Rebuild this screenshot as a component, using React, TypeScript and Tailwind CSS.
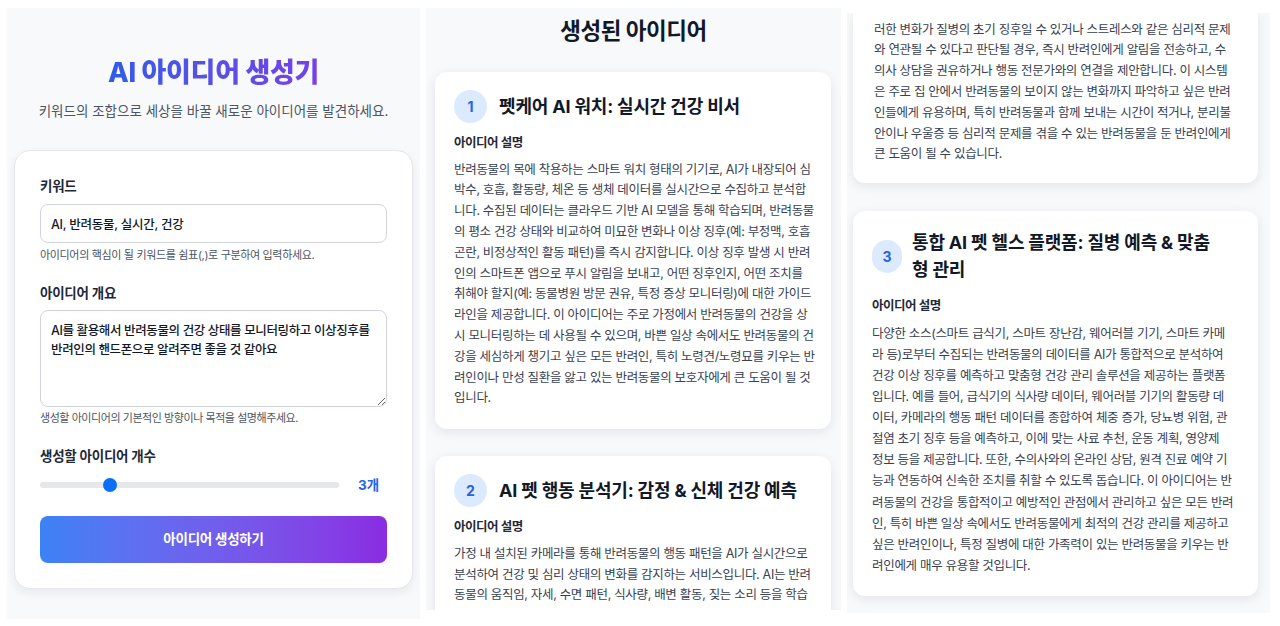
import React from 'react';

const idea1 = [
  '반려동물의 목에 착용하는 스마트 워치 형태의 기기로, AI가 내장되어 심',
  '박수, 호흡, 활동량, 체온 등 생체 데이터를 실시간으로 수집하고 분석합',
  '니다. 수집된 데이터는 클라우드 기반 AI 모델을 통해 학습되며, 반려동물',
  '의 평소 건강 상태와 비교하여 미묘한 변화나 이상 징후(예: 부정맥, 호흡',
  '곤란, 비정상적인 활동 패턴)를 즉시 감지합니다. 이상 징후 발생 시 반려',
  '인의 스마트폰 앱으로 푸시 알림을 보내고, 어떤 징후인지, 어떤 조치를',
  '취해야 할지(예: 동물병원 방문 권유, 특정 증상 모니터링)에 대한 가이드',
  '라인을 제공합니다. 이 아이디어는 주로 가정에서 반려동물의 건강을 상',
  '시 모니터링하는 데 사용될 수 있으며, 바쁜 일상 속에서도 반려동물의 건',
  '강을 세심하게 챙기고 싶은 모든 반려인, 특히 노령견/노령묘를 키우는 반',
  '려인이나 만성 질환을 앓고 있는 반려동물의 보호자에게 큰 도움이 될 것',
  '입니다.',
];

const idea2Top = [
  '가정 내 설치된 카메라를 통해 반려동물의 행동 패턴을 AI가 실시간으로',
  '분석하여 건강 및 심리 상태의 변화를 감지하는 서비스입니다. AI는 반려',
  '동물의 움직임, 자세, 수면 패턴, 식사량, 배변 활동, 짖는 소리 등을 학습',
];

const idea2Bottom = [
  '러한 변화가 질병의 초기 징후일 수 있거나 스트레스와 같은 심리적 문제',
  '와 연관될 수 있다고 판단될 경우, 즉시 반려인에게 알림을 전송하고, 수',
  '의사 상담을 권유하거나 행동 전문가와의 연결을 제안합니다. 이 시스템',
  '은 주로 집 안에서 반려동물의 보이지 않는 변화까지 파악하고 싶은 반려',
  '인들에게 유용하며, 특히 반려동물과 함께 보내는 시간이 적거나, 분리불',
  '안이나 우울증 등 심리적 문제를 겪을 수 있는 반려동물을 둔 반려인에게',
  '큰 도움이 될 수 있습니다.',
];

const idea3 = [
  '다양한 소스(스마트 급식기, 스마트 장난감, 웨어러블 기기, 스마트 카메',
  '라 등)로부터 수집되는 반려동물의 데이터를 AI가 통합적으로 분석하여',
  '건강 이상 징후를 예측하고 맞춤형 건강 관리 솔루션을 제공하는 플랫폼',
  '입니다. 예를 들어, 급식기의 식사량 데이터, 웨어러블 기기의 활동량 데',
  '이터, 카메라의 행동 패턴 데이터를 종합하여 체중 증가, 당뇨병 위험, 관',
  '절염 초기 징후 등을 예측하고, 이에 맞는 사료 추천, 운동 계획, 영양제',
  '정보 등을 제공합니다. 또한, 수의사와의 온라인 상담, 원격 진료 예약 기',
  '능과 연동하여 신속한 조치를 취할 수 있도록 돕습니다. 이 아이디어는 반',
  '려동물의 건강을 통합적이고 예방적인 관점에서 관리하고 싶은 모든 반려',
  '인, 특히 바쁜 일상 속에서도 반려동물에게 최적의 건강 관리를 제공하고',
  '싶은 반려인이나, 특정 질병에 대한 가족력이 있는 반려동물을 키우는 반',
  '려인에게 매우 유용할 것입니다.',
];

function Paragraph({ lines, leading = 'leading-[20.8px]' }: { lines: string[]; leading?: string }) {
  return (
    <p className={`text-[12.5px] tracking-[-0.025em] text-[#374151] ${leading}`}>
      {lines.map((line, i) => (
        <span key={i} className="block whitespace-nowrap">{line}</span>
      ))}
    </p>
  );
}

function Badge({ n, className = 'w-[33px]' }: { n: number; className?: string }) {
  return (
    <div className={`flex h-[33px] shrink-0 items-center justify-center rounded-full bg-[#dbeafe] text-[14px] font-bold text-[#2563eb] ${className}`}>
      {n}
    </div>
  );
}

type CardProps = {
  n: number;
  title: React.ReactNode;
  lines: string[];
  badge?: string;
  gap?: string;
  labelGap?: string;
  leading?: string;
};

function IdeaCard({ n, title, lines, badge, gap = 'gap-3', labelGap = 'mt-[11px]', leading }: CardProps) {
  return (
    <div className="rounded-xl bg-white px-[19px] pt-[18px] pb-[20px] shadow-[0_3px_12px_rgba(15,23,42,0.09)]">
      <div className={`flex items-center ${gap}`}>
        <Badge n={n} className={badge} />
        <h3 className="text-[18px] font-bold leading-[27px] tracking-[-0.01em] text-[#111827]">{title}</h3>
      </div>
      <h4 className={`${labelGap} text-[12.5px] font-semibold leading-[18px] tracking-[-0.04em] text-[#1f2937]`}>아이디어 설명</h4>
      <div className="mt-[7.6px]">
        <Paragraph lines={lines} leading={leading} />
      </div>
    </div>
  );
}

export default function App() {
  return (
    <div className="flex h-[626px] w-[1280px] items-start overflow-hidden bg-white font-['Inter','Noto_Sans_CJK_KR',sans-serif]">
      {/* 입력 폼 */}
      <section className="mt-[8px] ml-[7px] h-[611px] w-[413px] bg-[#f8f9fb] pt-[47px]">
        <h1 className="text-center text-[27px] font-extrabold leading-[36px] tracking-[-0.01em]">
          <span className="bg-linear-to-r from-[#2f5be6] to-[#7441e8] bg-clip-text text-transparent">AI 아이디어 생성기</span>
        </h1>
        <p className="mt-[10px] text-center text-[13.5px] leading-[20px] text-[#4b5563]">
          키워드의 조합으로 세상을 바꿀 새로운 아이디어를 발견하세요.
        </p>

        <div className="mx-[7px] mt-[29px] rounded-2xl border border-[#e5e7eb] bg-white px-[25px] pt-[25px] pb-[25px] shadow-[0_4px_10px_rgba(15,23,42,0.07)]">
          <label className="block text-[13.5px] font-semibold leading-[20px] tracking-[-0.02em] text-[#1f2937]">키워드</label>
          <input
            readOnly
            value="AI, 반려동물, 실시간, 건강"
            className="mt-2 h-[39px] w-full rounded-lg border border-[#d1d5db] px-[10px] text-[12.5px] font-medium tracking-[-0.02em] text-[#111827] outline-none"
          />
          <p className="mt-[4px] text-[11px] leading-[16px] tracking-[-0.03em] text-[#4b5563]">
            아이디어의 핵심이 될 키워드를 쉼표(,)로 구분하여 입력하세요.
          </p>

          <label className="mt-[20px] block text-[13.5px] font-semibold leading-[20px] tracking-[-0.02em] text-[#1f2937]">아이디어 개요</label>
          <textarea
            readOnly
            value="AI를 활용해서 반려동물의 건강 상태를 모니터링하고 이상징후를 반려인의 핸드폰으로 알려주면 좋을 것 같아요"
            className="mt-[7px] block h-[97px] w-full rounded-lg border border-[#d1d5db] px-[10px] pt-[10px] text-[12.5px] font-medium leading-[19px] tracking-[-0.03em] text-[#111827] outline-none"
          />
          <p className="mt-[3px] text-[11px] leading-[16px] tracking-[-0.04em] text-[#4b5563]">
            생성할 아이디어의 기본적인 방향이나 목적을 설명해주세요.
          </p>

          <label className="mt-[20px] block text-[13.5px] font-semibold leading-[20px] tracking-[-0.02em] text-[#1f2937]">생성할 아이디어 개수</label>
          <div className="mt-[9px] flex h-[20px] items-center gap-[19px]">
            <div className="relative h-[6px] w-[299px] rounded-full bg-[#e5e7eb]">
              <div className="absolute top-1/2 left-[63px] h-[14px] w-[14px] -translate-y-1/2 rounded-full bg-[#0b6ef9]" />
            </div>
            <span className="text-[13.5px] font-bold text-[#2563eb]">3개</span>
          </div>

          <button className="mt-[21px] h-[47px] w-full rounded-lg bg-linear-to-r from-[#3b82f6] to-[#8a2be2] text-[13.5px] font-semibold tracking-[-0.02em] text-white">
            아이디어 생성하기
          </button>
        </div>
      </section>

      {/* 결과 - 상단 */}
      <section className="mt-[8px] ml-[6px] h-[602px] w-[415px] overflow-hidden bg-[#f8f9fb] pt-[9px]">
        <h2 className="text-center text-[22.5px] font-bold leading-[28px] tracking-[-0.02em] text-[#111827]">생성된 아이디어</h2>
        <div className="mt-[27px] ml-[9px] mr-[10px] flex flex-col gap-[27px]">
          <IdeaCard n={1} title="펫케어 AI 워치: 실시간 건강 비서" lines={idea1} />
          <IdeaCard n={2} title="AI 펫 행동 분석기: 감정 & 신체 건강 예측" lines={idea2Top} />
        </div>
      </section>

      {/* 결과 - 스크롤 */}
      <section className="mt-[13px] ml-[6px] h-[600px] w-[423px] overflow-hidden bg-[#f8f9fb]">
        <div className="ml-[6px] mr-[12px] flex flex-col gap-[28px]">
          <div className="rounded-b-xl bg-white px-[21px] pt-[6.6px] pb-[18px] shadow-[0_3px_12px_rgba(15,23,42,0.09)]">
            <Paragraph lines={idea2Bottom} />
          </div>
          <IdeaCard
            n={3}
            badge="w-[30px]"
            gap="gap-[10px]"
            labelGap="mt-[14px]"
            leading="leading-[21.1px]"
            title={<>통합 AI 펫 헬스 플랫폼: 질병 예측 & 맞춤<br />형 관리</>}
            lines={idea3}
          />
        </div>
      </section>
    </div>
  );
}
